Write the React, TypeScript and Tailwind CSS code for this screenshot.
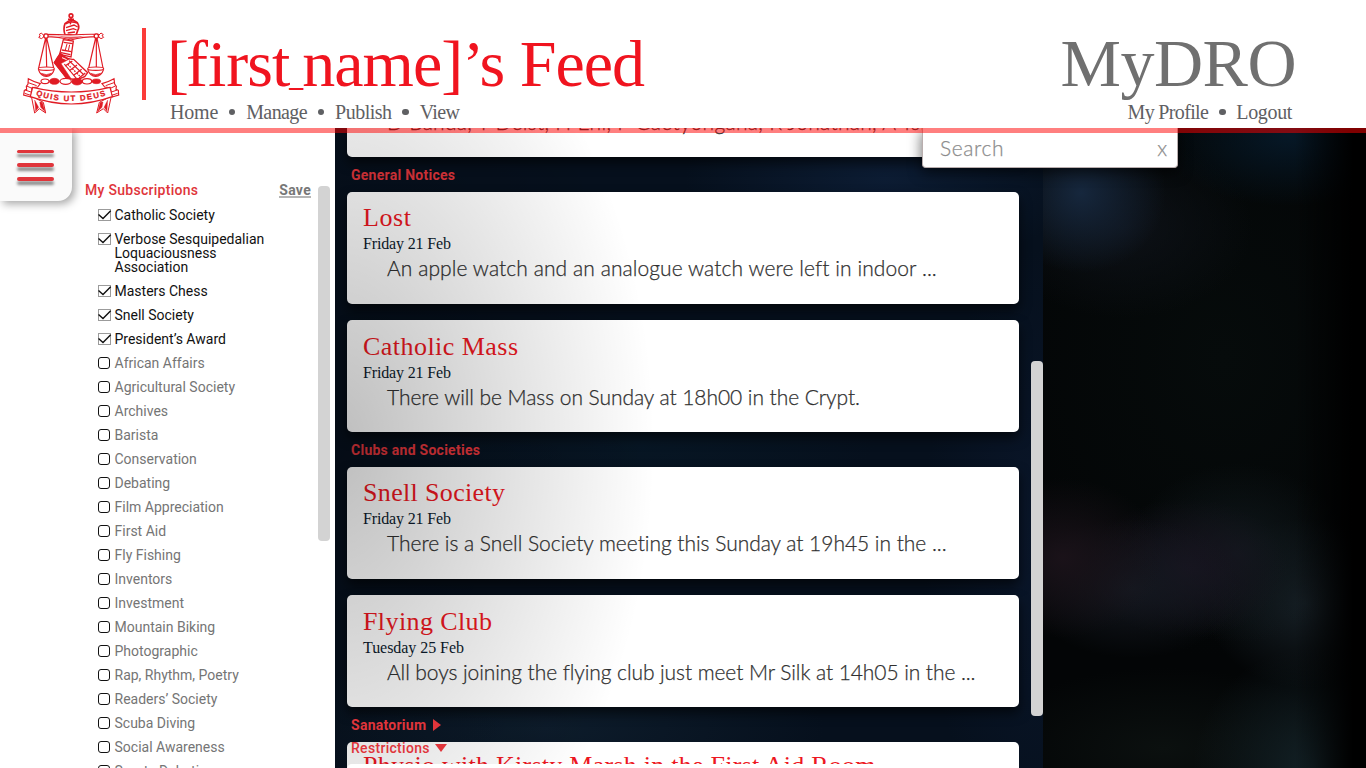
import type { ReactNode } from 'react'

const SUBSCRIPTIONS: { name: string; on?: boolean }[] = [
  { name: 'Catholic Society', on: true },
  { name: 'Verbose Sesquipedalian Loquaciousness Association', on: true },
  { name: 'Masters Chess', on: true },
  { name: 'Snell Society', on: true },
  { name: 'President’s Award', on: true },
  { name: 'African Affairs' },
  { name: 'Agricultural Society' },
  { name: 'Archives' },
  { name: 'Barista' },
  { name: 'Conservation' },
  { name: 'Debating' },
  { name: 'Film Appreciation' },
  { name: 'First Aid' },
  { name: 'Fly Fishing' },
  { name: 'Inventors' },
  { name: 'Investment' },
  { name: 'Mountain Biking' },
  { name: 'Photographic' },
  { name: 'Rap, Rhythm, Poetry' },
  { name: 'Readers’ Society' },
  { name: 'Scuba Diving' },
  { name: 'Social Awareness' },
  { name: 'Sports Debating' },
]

function Crest() {
  return (
    <svg className="absolute left-5 top-3 h-[104px] w-[102px]" viewBox="60 36 306 312" fill="none" stroke="#e01b24" strokeWidth="4">
      {/* hand and pommel */}
      <circle cx="213" cy="47" r="5.5" strokeWidth="5" />
      <path d="M213 52v8M204 58h18" strokeWidth="5" />
      <path d="M195 104q-6-18 0-33q18-18 37-3q8 13 1 24l-5 14z" fill="#fff" strokeWidth="5" />
      <path d="M197 72q14-10 34-3M198 83l24-8 11 6M198 92l22-6 10 4M214 61l-3 12M203 99l22-3" />
      {/* sleeve and forearm */}
      <path d="M190 119l30 4-7 48-34-8z" fill="#fff" />
      <path d="M191 127l27 4M186 150l28 5M183 158l28 6" strokeWidth="4" />
      <path d="M201 132l-5 18M209 134l-4 18" strokeWidth="3" />
      <path d="M181 160q-10 13-18 28l36 46q34 9 55-4l9-12-42-40q-20 2-40-18z" fill="#fff" />
      <path d="M162 187l36 46 15 3-30-45-8-16zM180 160l-14 24 18 6 24-13-15-7z" fill="#e01b24" strokeWidth="2" />
      <path d="M186 173l14 6" stroke="#fff" strokeWidth="3" />
      <path d="M207 182l45 43M193 192l36 43" strokeWidth="3.5" />
      <path d="M217 183l-22 15M231 195l-23 17M245 208l-24 18M256 219l-19 15" strokeWidth="3.5" />
      <path d="M203 193l10 10M217 206l11 11M230 219l10 10" strokeDasharray="5 3" strokeWidth="4" />
      {/* beam */}
      <path d="M134 103q40 0 78 2q42-3 82-2v7q-44 0-82 10q-36-10-78-10z" fill="#fff" strokeWidth="3.5" />
      <path d="M172 107q40 6 82 0q-20 7-42 11q-18-5-40-11z" fill="#e01b24" stroke="none" opacity=".75" />
      <circle cx="138" cy="108" r="6.5" fill="#fff" />
      <circle cx="289" cy="108" r="6.5" fill="#fff" />
      <path d="M131 106l-7-7-7 5 4 3-5 5 8 4 7-5zM296 106l7-7 7 5-4 3 5 5-8 4-7-5z" strokeWidth="3" />
      {/* scales */}
      <path d="M137 114l-21 90M138 114l2 88M140 114l21 90M287 114l-21 90M289 114v88M291 114l18 90" strokeWidth="3.5" />
      <ellipse cx="139" cy="206" rx="24" ry="5" fill="#fff" strokeWidth="3.5" />
      <ellipse cx="287" cy="206" rx="24" ry="5" fill="#fff" strokeWidth="3.5" />
      <path d="M115 208q7 21 24 21t24-21M263 208q7 21 24 21t24-21" strokeWidth="3.5" />
      <path d="M124 220q15 8 30 0q-5 8-15 8t-15-8M272 220q15 8 30 0q-5 8-15 8t-15-8" fill="#e01b24" strokeWidth="2" />
      {/* torse */}
      <ellipse cx="135" cy="244" rx="12" ry="7" fill="#fff" strokeWidth="3.5" />
      <ellipse cx="163" cy="244" rx="15" ry="9" fill="#e01b24" strokeWidth="2" />
      <ellipse cx="197" cy="244" rx="17" ry="9" fill="#fff" strokeWidth="3.5" />
      <ellipse cx="231" cy="245" rx="16" ry="10" fill="#e01b24" strokeWidth="2" />
      <ellipse cx="261" cy="244" rx="14" ry="8" fill="#fff" strokeWidth="3.5" />
      <ellipse cx="289" cy="244" rx="13" ry="7" fill="#e01b24" strokeWidth="2" />
      {/* banner tails */}
      <path d="M94 288l10 51 14-13 19 13-7-32zM334 288l-11 51-13-13-20 13 8-32z" fill="#fff" strokeWidth="3" />
      <path d="M104 300l3 34 9-12zM119 306l3 16 13 13-8-28zM323 300l-2 34-9-12zM309 306l-3 16-13 13 8-28z" fill="#e01b24" strokeWidth="1" />
      <path d="M85 236q18 10 36 15l-8 10-17 2-3 28-22-6 2-14 7-3-1-9 5-7zM342 236q-18 10-36 15l8 10 17 2 5 28 20-6-1-14-7-3 1-9-5-7z" fill="#fff" strokeWidth="3.5" />
      <path d="M85 248l25 9M80 258l16 7M75 270l18 6M74 280l18 6M342 248l-25 9M346 258l-15 7M352 270l-18 6M353 280l-18 6" strokeWidth="3" />
      <path d="M98 262q116 28 232 0l7 28q-123 44-246 0z" fill="#fff" strokeWidth="3.5" />
      <path id="motto" d="M107 286q107 36 222-3" stroke="none" />
      <text className="font-['Liberation_Sans'] font-bold" fill="#e01b24" stroke="#e01b24" strokeWidth=".8" fontSize="23.5">
        <textPath href="#motto" textLength="214">QUIS UT DEUS</textPath>
      </text>
    </svg>
  )
}

function Check({ on }: { on?: boolean }) {
  if (!on) return <span className="mt-px h-3 w-3 shrink-0 rounded-[3px] border border-[#111]" />
  return (
    <svg className="mt-px h-3 w-[13px] shrink-0 overflow-visible" viewBox="0 0 13 12" fill="none">
      <rect x=".5" y=".5" width="12" height="11" stroke="#9b9b9b" />
      <path d="M.5 5.5 5 9.5 12.7 1.8" stroke="#111" strokeWidth="1.4" />
    </svg>
  )
}

function Heading({ children, className = '' }: { children: ReactNode; className?: string }) {
  return (
    <h2 className={`flex h-[35px] items-center pl-1 pt-px font-['Roboto'] text-sm font-bold tracking-[0.26px] text-[#e0353b] ${className}`}>
      {children}
    </h2>
  )
}

function Card({ title, titleClass, date, dateClass, body, bodyClass, pad = 'pt-[11px]' }: {
  title: string; titleClass: string; date: string; dateClass: string; body: string; bodyClass: string; pad?: string
}) {
  return (
    <article className={`h-28 rounded-[5px] bg-white px-4 shadow-[0_6px_12px_rgba(0,0,0,0.6)] ${pad}`}>
      <h3 className={`font-['Liberation_Serif'] text-[26px] leading-[30px] text-[#ed1722] ${titleClass}`}>{title}</h3>
      <p className={`mt-px font-['Liberation_Serif'] text-base leading-5 text-[#0c1a2c] ${dateClass}`}>{date}</p>
      <p className={`mt-0.5 whitespace-nowrap pl-6 font-['Lato'] text-[21px] font-light leading-6 text-[#303030] [-webkit-text-stroke:0.25px_#303030] ${bodyClass}`}>{body}</p>
    </article>
  )
}

function Dot() {
  return <span className="mx-[10.8px] h-[6.5px] w-[6.5px] shrink-0 rounded-full bg-[#5f6063]" />
}

export default function App() {
  return (
    <div className="relative h-[768px] w-[1366px] overflow-hidden bg-[#030506]">
      <header className="relative z-20 flex h-32 justify-between bg-white pr-[70px]">
        <div className="flex">
          <Crest />
          <div className="ml-[142px] mt-7 h-[72px] w-1 bg-[#fb3b39]" />
          <div className="ml-6 pt-7">
            <h1 className="-ml-[3px] whitespace-nowrap font-['Liberation_Serif'] text-[66px] leading-[72px] tracking-[-1px] text-[#f0141f]">
              <span className="tracking-[-3px]">[</span><span className="tracking-normal">fi</span>rst<span className="text-[28px] font-bold leading-none">_</span>name]’s Feed
            </h1>
            <nav className="flex h-6 items-center font-['Liberation_Serif'] text-xl leading-6 text-[#5f6063]">
              <a className="tracking-[-0.2px]">Home</a><Dot />
              <a className="tracking-[-0.6px]">Manage</a><Dot />
              <a className="tracking-[-0.5px]">Publish</a><Dot />
              <a className="tracking-[-0.6px]">View</a>
            </nav>
          </div>
        </div>
        <div className="flex flex-col items-end pt-7">
          <div className="-mt-px mb-px font-['Liberation_Serif'] text-[68px] leading-[72px] tracking-[-0.5px] text-[#707070]">MyDRO</div>
          <nav className="mr-1 flex h-6 items-center font-['Liberation_Serif'] text-xl leading-6 text-[#5f6063]">
            <a className="tracking-[-0.65px]">My Profile</a><Dot />
            <a className="tracking-[-0.35px]">Logout</a>
          </nav>
        </div>
      </header>
      <div className="relative z-20 -mb-[5px] h-[5px] bg-[#ff0000]/50" />

      <main className="relative flex h-[640px]">
        <aside className="flex w-[335px] justify-between bg-white pr-[5px] pt-[54px] font-['Roboto'] text-sm leading-[14px]">
          <div className="ml-[85px] w-[226px]">
            <div className="flex h-[15px] justify-between">
              <h2 className="mt-px font-medium leading-[14px] tracking-[0.28px] text-[#e0353b]">My Subscriptions</h2>
              <a className="mt-0.5 h-[14px] border-b-2 border-[#b5b5b5] font-bold leading-3 tracking-[0.3px] text-[#777]">Save</a>
            </div>
            <ul className="mt-[11px] flex flex-col gap-2.5 pl-[13px]">
              {SUBSCRIPTIONS.map((s) => (
                <li key={s.name} className="flex">
                  <Check on={s.on} />
                  <span className={s.on ? 'ml-[3.5px] w-[170px] text-[#111]' : 'ml-[4.5px] text-[#757575]'}>{s.name}</span>
                </li>
              ))}
            </ul>
          </div>
          <div className="mt-1 h-[355px] w-3 rounded bg-[#d3d3d3]" />
        </aside>

        <section className="relative flex w-[708px] justify-between overflow-hidden bg-[#06101d] bg-[radial-gradient(ellipse_200px_90px_at_550px_50px,#0c1c33,transparent),radial-gradient(ellipse_240px_80px_at_300px_315px,#071624,transparent),radial-gradient(ellipse_280px_80px_at_210px_600px,#0d1c2b,transparent),radial-gradient(ellipse_120px_300px_at_708px_420px,#0a162a,transparent)] pl-3">
          <div className="w-[672px]">
            <article className="h-[29px] overflow-hidden rounded-b-[5px] bg-white shadow-[0_6px_12px_rgba(0,0,0,0.6)]">
              <p className="-mt-[18px] whitespace-nowrap pl-10 font-['Lato'] text-[21px] font-light leading-6 tracking-[0.3px] text-[#303030] [-webkit-text-stroke:0.25px_#303030]">
                D Banda, T Deist, H Eni, P Gaetyongana, R Jonathan, A Tsiame
              </p>
            </article>
            <Heading>General Notices</Heading>
            <div className="flex flex-col gap-4">
              <Card title="Lost" titleClass="tracking-[0.55px]" date="Friday 21 Feb" dateClass="tracking-[-0.15px]"
                body="An apple watch and an analogue watch were left in indoor ..." bodyClass="tracking-[0.083px]" />
              <Card pad="pt-3" title="Catholic Mass" titleClass="tracking-[0.46px]" date="Friday 21 Feb" dateClass="tracking-[-0.15px]"
                body="There will be Mass on Sunday at 18h00 in the Crypt." bodyClass="tracking-[-0.06px]" />
            </div>
            <Heading>Clubs and Societies</Heading>
            <div className="flex flex-col gap-4">
              <Card title="Snell Society" titleClass="tracking-[0.34px]" date="Friday 21 Feb" dateClass="tracking-[-0.15px]"
                body="There is a Snell Society meeting this Sunday at 19h45 in the ..." bodyClass="tracking-[-0.035px]" />
              <Card pad="pt-3" title="Flying Club" titleClass="tracking-[0.4px]" date="Tuesday 25 Feb" dateClass="tracking-[-0.05px]"
                body="All boys joining the flying club just meet Mr Silk at 14h05 in the ..." bodyClass="tracking-[-0.08px]" />
            </div>
            <Heading className="relative z-10">
              Sanatorium
              <svg className="ml-[7px] h-3 w-2" viewBox="0 0 8 12"><path d="M0 0 8 6 0 12z" fill="#e0353b" /></svg>
            </Heading>
            <article className="relative h-[26px] overflow-hidden rounded-t-[5px] bg-white px-4 pt-[9px]">
              <h3 className="whitespace-nowrap font-['Liberation_Serif'] text-[26px] leading-[30px] tracking-[0.25px] text-[#ed1722]">
                Physio with Kirsty Marsh in the First Aid Room
              </h3>
              <div className="absolute left-1 top-0 z-10 flex items-center font-['Roboto'] text-sm font-medium leading-3 tracking-[0.3px] text-[#e0353b]">
                Restrictions
                <svg className="ml-[5px] h-2 w-3" viewBox="0 0 12 8"><path d="M0 0H12L6 8z" fill="#e0353b" /></svg>
              </div>
            </article>
            <div className="relative z-10 -mt-1 h-28 rounded-[5px] bg-white" />
          </div>
          <div className="mt-[233px] h-[355px] w-3 rounded bg-[#d3d3d3]" />
          <div className="pointer-events-none absolute inset-0 bg-[radial-gradient(ellipse_320px_500px_at_0px_317px,rgba(0,0,0,0.26),transparent)]" />
        </section>

        <div className="flex-1 bg-[linear-gradient(90deg,transparent_78%,#000_96%),radial-gradient(ellipse_85px_80px_at_38px_65px,#16273d,transparent),radial-gradient(ellipse_130px_70px_at_245px_8px,#061827,transparent),radial-gradient(ellipse_130px_90px_at_80px_100px,#0d1117,transparent),radial-gradient(ellipse_100px_80px_at_20px_430px,#1a1219,transparent),radial-gradient(ellipse_110px_70px_at_90px_460px,#141820,transparent),radial-gradient(ellipse_100px_70px_at_145px_440px,#18131f,transparent),radial-gradient(ellipse_110px_90px_at_195px_425px,#10181c,transparent),radial-gradient(ellipse_100px_85px_at_262px_475px,#161f25,transparent),radial-gradient(ellipse_120px_120px_at_270px_640px,#132126,transparent),radial-gradient(ellipse_180px_80px_at_120px_620px,#0b100f,transparent),radial-gradient(ellipse_240px_300px_at_180px_230px,#060b0b,transparent)]" />

        <button className="absolute left-0 top-0 flex h-[73px] w-[72px] flex-col items-start gap-[10px] rounded-br-[14px] bg-[#fafafa] pl-[17px] pt-[21.5px] shadow-[3px_3px_9px_rgba(0,0,0,0.35)]" aria-label="Menu">
          <span className="h-[3.7px] w-[37px] rounded-full bg-[#e0353b] shadow-[0_4px_3px_rgba(0,0,0,0.45)]" />
          <span className="h-[3.7px] w-[37px] rounded-full bg-[#e0353b] shadow-[0_4px_3px_rgba(0,0,0,0.45)]" />
          <span className="h-[3.7px] w-[37px] rounded-full bg-[#e0353b] shadow-[0_4px_3px_rgba(0,0,0,0.45)]" />
        </button>

        <div className="absolute left-[922px] top-0 flex h-10 w-64 justify-between rounded-b border border-t-0 border-[#b9aeae] bg-white pl-[17px] pr-[10px] pt-2 font-['Lato'] text-[21px] font-light leading-6 text-[#8c8c8c] shadow-[0_4px_14px_rgba(0,0,0,0.6)] [-webkit-text-stroke:0.25px_#8c8c8c]">
          <span className="tracking-[0.6px]">Search</span>
          <span>x</span>
        </div>
      </main>
    </div>
  )
}
